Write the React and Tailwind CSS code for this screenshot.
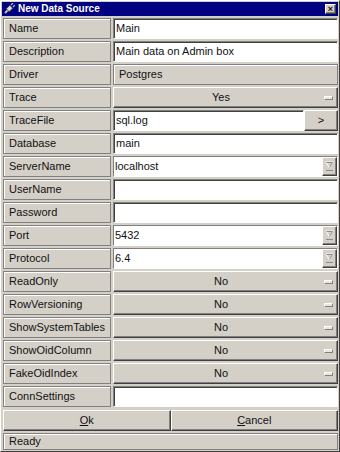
import React from 'react';

const frame = 'border border-[#808080] shadow-[inset_1px_1px_0_#ffffff] bg-[#d4d0c8]';
const sunken = 'border-t border-l border-[#808080] border-b border-r border-b-white border-r-white shadow-[inset_1px_1px_0_#404040]';
const raised = 'border-t border-l border-white border-b border-r border-b-[#404040] border-r-[#404040] shadow-[inset_-1px_-1px_0_#808080] bg-[#d4d0c8]';

const Label = ({ text }) => (
    <div className={`w-[108px] h-full flex items-center pl-[5px] shrink-0 overflow-hidden whitespace-nowrap ${frame}`}>
        {text}
    </div>
);

const TextValue = ({ value }) => (
    <div className={`flex-1 h-full bg-white flex items-center pl-[2px] ${sunken}`}>{value}</div>
);

const OptionMenu = ({ value }) => (
    <div className={`flex-1 h-full flex items-center ${raised}`}>
        <span className="flex-1 text-center pl-[4px]">{value}</span>
        <span className="w-[9px] h-[4px] mr-[4px] border-t border-l border-white border-b border-r border-b-[#808080] border-r-[#808080] bg-[#e8e6e0]" />
    </div>
);

const ComboValue = ({ value }) => (
    <div className={`flex-1 h-full flex ${sunken}`}>
        <div className="flex-1 bg-white flex items-center pl-[1px]">{value}</div>
        <div className={`w-[15px] h-full flex items-center justify-center ${raised}`}>
            <svg width="9" height="11" viewBox="0 0 9 11">
                <path d="M1 1 H8 L4.5 7 Z" fill="none" stroke="#ffffff" strokeWidth="1" />
                <path d="M1.5 1.5 H7.5 L4.5 6.5" fill="none" stroke="#8a8a8a" strokeWidth="1" />
                <rect x="1" y="9" width="7" height="1" fill="#8a8a8a" />
            </svg>
        </div>
    </div>
);

const rows = [
    { label: 'Name', kind: 'text', value: 'Main' },
    { label: 'Description', kind: 'text', value: 'Main data on Admin box' },
    { label: 'Driver', kind: 'static', value: 'Postgres' },
    { label: 'Trace', kind: 'option', value: 'Yes' },
    { label: 'TraceFile', kind: 'file', value: 'sql.log' },
    { label: 'Database', kind: 'text', value: 'main' },
    { label: 'ServerName', kind: 'combo', value: 'localhost' },
    { label: 'UserName', kind: 'text', value: '' },
    { label: 'Password', kind: 'text', value: '' },
    { label: 'Port', kind: 'combo', value: '5432' },
    { label: 'Protocol', kind: 'combo', value: '6.4' },
    { label: 'ReadOnly', kind: 'option', value: 'No' },
    { label: 'RowVersioning', kind: 'option', value: 'No' },
    { label: 'ShowSystemTables', kind: 'option', value: 'No' },
    { label: 'ShowOidColumn', kind: 'option', value: 'No' },
    { label: 'FakeOidIndex', kind: 'option', value: 'No' },
    { label: 'ConnSettings', kind: 'text', value: '' },
];

const Value = ({ row }) => {
    if (row.kind === 'text') return <TextValue value={row.value} />;
    if (row.kind === 'option') return <OptionMenu value={row.value} />;
    if (row.kind === 'combo') return <ComboValue value={row.value} />;
    if (row.kind === 'static')
        return <div className={`flex-1 h-full flex items-center pl-[5px] ${frame}`}>{row.value}</div>;
    return (
        <div className="flex-1 h-full flex">
            <TextValue value={row.value} />
            <div className={`w-[34px] h-full flex items-center justify-center ${raised}`}>&gt;</div>
        </div>
    );
};

export default function App() {
    return (
        <div className="w-[340px] h-[452px] bg-[#d4d0c8] border border-t-white border-l-white border-b-[#404040] border-r-[#404040] p-[1px] flex flex-col text-[11px] text-[#111] font-['Liberation_Sans',Arial,sans-serif] leading-none select-none">
            <div className="h-[14px] bg-[#000080] flex items-center pl-[1px] pr-[2px] shrink-0">
                <svg width="12" height="12" viewBox="0 0 12 12" className="mr-[3px]">
                    <path d="M2 10 L5 7" stroke="#c0c0c0" strokeWidth="2" />
                    <rect x="4.5" y="3" width="4" height="5" transform="rotate(45 6.5 5.5)" fill="#e0e0e0" stroke="#404040" strokeWidth="0.8" />
                    <path d="M8 2 L10 0 M10 4 L12 2" stroke="#c0c0c0" strokeWidth="1.2" />
                </svg>
                <span className="text-white font-bold text-[10px]">New Data Source</span>
                <span className="flex-1" />
                <span className={`w-[11px] h-[10px] flex items-center justify-center text-[9px] font-bold ${raised}`}>×</span>
            </div>
            <div className="flex flex-col gap-[2px] mt-[2px] pl-[1px] shrink-0">
                {rows.map((row) => (
                    <div key={row.label} className="h-[21px] flex gap-[2px]">
                        <Label text={row.label} />
                        <Value row={row} />
                    </div>
                ))}
                <div className="h-[21px] flex mt-[1px]">
                    <div className={`flex-1 h-full flex items-center justify-center ${raised}`}>
                        <span><span className="underline">O</span>k</span>
                    </div>
                    <div className={`flex-1 h-full flex items-center justify-center ${raised}`}>
                        <span><span className="underline">C</span>ancel</span>
                    </div>
                </div>
            </div>
            <div className={`flex-1 mt-[2px] ml-[1px] flex items-center pl-[5px] ${frame}`}>Ready</div>
        </div>
    );
}
